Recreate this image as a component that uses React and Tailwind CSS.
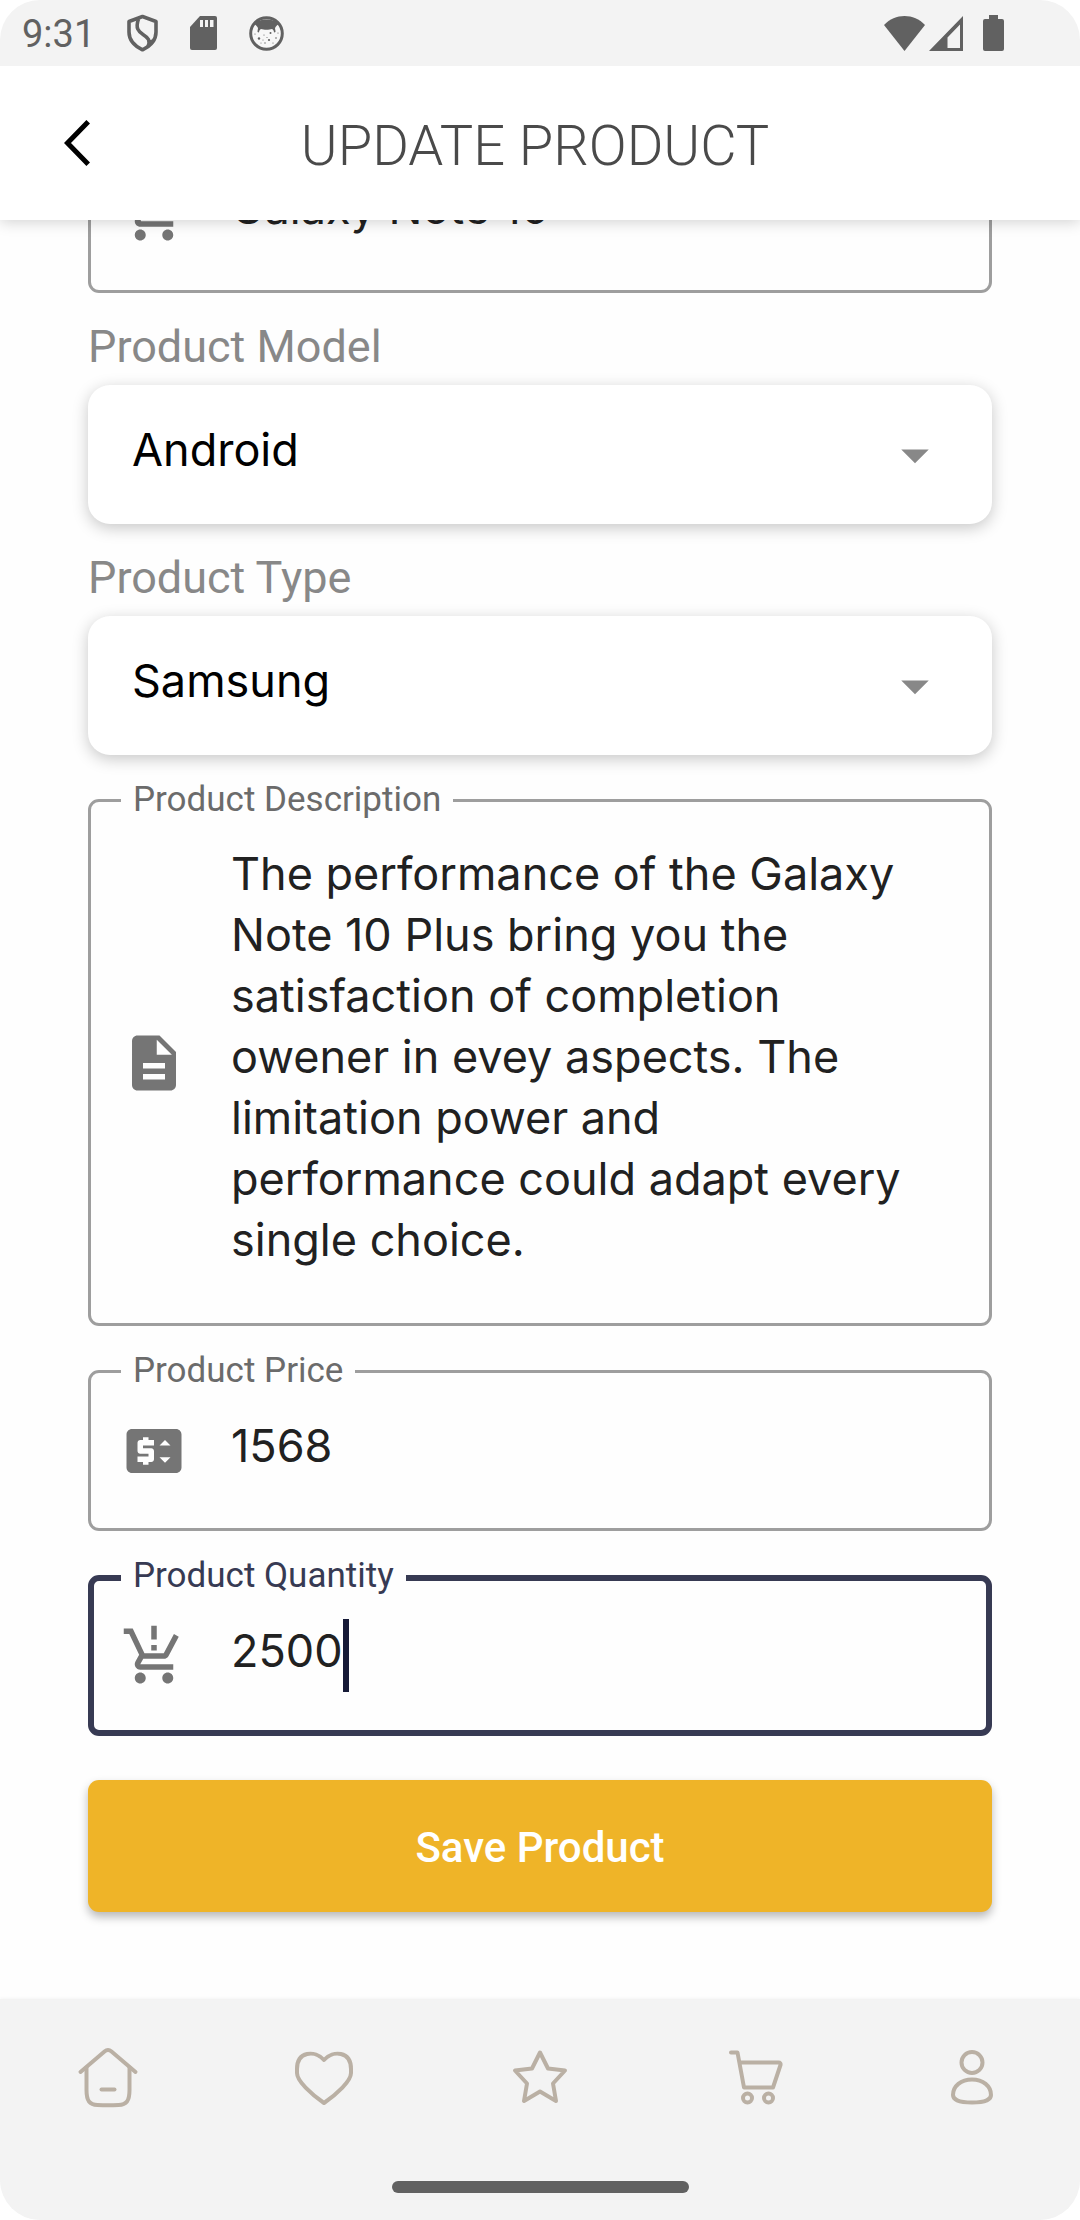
import React from "react";
import {
  MdArrowDropDown,
  MdDescription,
  MdPriceChange,
  MdProductionQuantityLimits,
  MdShoppingCart,
} from "react-icons/md";

const valueText = "font-['Inter',sans-serif] text-[45px] leading-[61px] text-[#212121]";

function ShieldIcon() {
  return (
    <svg className="h-[38px] w-[31px]" viewBox="0 0 31 38" fill="none" stroke="#616161" strokeWidth="3.6" strokeLinejoin="round" aria-hidden="true">
      <path d="M15.500 2.500 29 7.500V18c0 8-5.500 14-13.500 17.800C7.500 32 2 26 2 18V7.500z" />
      <path d="M11.500 5C8 15 12 17.500 16 20.500c5.500 3.500 7.500 6 5 12" />
      <path d="M22 27l3 -1 -3 5z" fill="#616161" strokeWidth="1" />
    </svg>
  );
}

function SdCardIcon() {
  return (
    <svg className="h-[34px] w-[27px]" viewBox="0 0 27 34" aria-hidden="true">
      <path fill="#616161" d="M10 0h15a2 2 0 0 1 2 2v30a2 2 0 0 1-2 2H2a2 2 0 0 1-2-2V11z" />
      <path fill="#f3f3f3" d="M10 4h3v7h-3zM15 4h3v7h-3zM20 4h3.500v7H20z" />
    </svg>
  );
}

function FaceIcon() {
  return (
    <svg className="size-[35px]" viewBox="0 0 35 35" aria-hidden="true">
      <circle cx="17.500" cy="17.500" r="15.800" fill="#f7f7f7" stroke="#616161" strokeWidth="3" />
      <path fill="#616161" d="M5 8C9 2 26 2 30 8c-2 1-3 2-4 4 0 1 .5 2 .5 4l-1.500.5c0-2-1-3-2-3.500-3 1-8 1-11 0-1 .5-2 1.500-2 3.500L8.500 16c0-2 .5-3 .5-4-1-2-2-3-4-4z" />
      <g fill="#616161">
        <circle cx="10" cy="22.500" r="1.200" />
        <circle cx="21.500" cy="17" r="1" />
        <circle cx="20" cy="24" r="1.100" />
        <circle cx="27" cy="22" r=".8" />
        <circle cx="15" cy="19" r=".6" />
        <circle cx="16" cy="27" r=".7" />
        <circle cx="12" cy="27" r=".5" />
        <circle cx="24" cy="27" r=".6" />
        <circle cx="6" cy="18" r=".6" />
        <circle cx="18" cy="21.500" r=".5" />
        <circle cx="29" cy="17" r=".6" />
        <circle cx="14" cy="24" r=".5" />
      </g>
    </svg>
  );
}

function StatusBar() {
  return (
    <div className="relative z-20 flex h-[66px] items-center bg-[#f3f3f3] pr-[76px] pl-[22px] font-['Roboto',sans-serif] text-[#616161]">
      <span className="pt-[2px] text-[38px] leading-[44px]">9:31</span>
      <div className="ml-8 flex items-center gap-8">
        <ShieldIcon />
        <SdCardIcon />
        <FaceIcon />
      </div>
      <div className="ml-auto flex items-center">
        <svg className="h-[35px] w-[41px]" viewBox="0 0 41 35" aria-hidden="true">
          <path fill="#616161" d="M0 9C11-3 30-3 41 9L20.500 35z" />
        </svg>
        <svg className="ml-1 h-[35px] w-[34px]" viewBox="0 0 34 35" aria-hidden="true">
          <path fill="#616161" fillRule="evenodd" d="M34 0v35H0zM31 8.500 18.500 21.500V32H31z" />
        </svg>
        <svg className="ml-5 h-[36px] w-[21px]" viewBox="0 0 21 36" aria-hidden="true">
          <path fill="#616161" d="M6 0h9v4h4a2 2 0 0 1 2 2v28a2 2 0 0 1-2 2H2a2 2 0 0 1-2-2V6a2 2 0 0 1 2-2h4z" />
        </svg>
      </div>
    </div>
  );
}

function Header() {
  return (
    <header className="relative z-10 grid h-[154px] grid-cols-[154px_1fr_164px] items-center bg-white shadow-[0_2px_14px_rgba(0,0,0,0.18)]">
      <button type="button" aria-label="Back" className="flex h-[154px] items-center justify-center">
        <svg className="h-[46px] w-[26px]" viewBox="0 0 26 46" fill="none" stroke="#000" strokeWidth="5" aria-hidden="true">
          <path d="M24.200 1.800 3.500 23 24.200 44.200" />
        </svg>
      </button>
      <h1 className="pt-[6px] text-center font-['Roboto',sans-serif] text-[56px] leading-[64px] font-light text-[#4a4a4a]">
        UPDATE PRODUCT
      </h1>
    </header>
  );
}

function OutlinedField({ id, label, icon: Icon, active = false, children }) {
  return (
    <div
      className={
        active
          ? "relative mt-11 flex items-center rounded-[11px] border-6 border-[#373a53] pr-[52px] pl-[27px]"
          : "relative mt-11 flex items-center rounded-[11px] border-3 border-[#9e9e9e] pr-[55px] pl-[30px]"
      }
    >
      {label && (
        <label
          htmlFor={id}
          className={
            active
              ? "absolute -top-[25px] left-[27px] bg-[#fefefe] px-3 font-['Roboto',sans-serif] text-[35px] leading-[40px] text-[#373a53]"
              : "absolute -top-[22px] left-[30px] bg-[#fefefe] px-3 font-['Roboto',sans-serif] text-[35px] leading-[40px] text-[#6b6b6b]"
          }
        >
          {label}
        </label>
      )}
      <Icon className="mr-11 size-[66px] shrink-0 text-[#757575]" aria-hidden="true" />
      {children}
    </div>
  );
}

function SelectField({ id, label, options }) {
  return (
    <div className="mt-8 flex flex-col">
      <label htmlFor={id} className="mb-4 font-['Roboto',sans-serif] text-[45px] leading-[44px] text-[#888888]">
        {label}
      </label>
      <div className="relative flex items-center">
        <select
          id={id}
          className="h-[139px] w-full appearance-none rounded-[22px] bg-white pr-[110px] pb-[10px] pl-11 font-['Inter',sans-serif] text-[45px] leading-[61px] text-black shadow-[0_4px_16px_rgba(0,0,0,0.22)]"
        >
          {options.map((o) => (
            <option key={o}>{o}</option>
          ))}
        </select>
        <MdArrowDropDown className="pointer-events-none absolute right-11 size-[66px] text-[#888888]" aria-hidden="true" />
      </div>
    </div>
  );
}

const navItems = [
  {
    name: "Home",
    art: (
      <>
        <path d="M5.500 28 29.500 7.500q3.500-3 7 0L60.500 28" />
        <path d="M11.500 23.500V46c0 11 3 14.500 11 15q10.500.5 21 0c8-.5 11-4 11-15V23.500" />
        <path d="M26.500 45.500h13" />
      </>
    ),
  },
  {
    name: "Favourites",
    art: <path d="M33 16C24 6 6 7 6 25v4c0 8 14 21 27 30 13-9 27-22 27-30v-4C60 7 42 6 33 16z" />,
  },
  {
    name: "Starred",
    art: <path d="M33 8.500 41 24.500 58 26.500 46 39.500 49 57 33 47.500 17 57 20 39.500 8 26.500 25 24.500z" />,
  },
  {
    name: "Cart",
    art: (
      <>
        <path d="M8 8.500h6.500L21 43.500h29L57.500 21q.5-2.500-2-2.500H17" />
        <circle cx="24.500" cy="54" r="4.500" />
        <circle cx="45.500" cy="54" r="4.500" />
      </>
    ),
  },
  {
    name: "Profile",
    art: (
      <>
        <circle cx="33" cy="18.500" r="10.500" />
        <path d="M14 51C14 42 22 35.500 33 35.500S52 42 52 51c0 4-5 7.500-19 7.500S14 55 14 51z" />
      </>
    ),
  },
];

function BottomNav() {
  return (
    <footer className="flex flex-col items-center bg-[#f3f3f3] pb-[27px] shadow-[0_-1px_3px_rgba(0,0,0,0.04)]">
      <nav className="grid w-full grid-cols-5 pt-[45px]">
        {navItems.map(({ name, art }) => (
          <a key={name} href="#" aria-label={name} className="flex justify-center">
            <svg
              className="size-[66px]"
              viewBox="0 0 66 66"
              fill="none"
              stroke="#bab0a4"
              strokeWidth="4"
              strokeLinecap="round"
              strokeLinejoin="round"
              aria-hidden="true"
            >
              {art}
            </svg>
          </a>
        ))}
      </nav>
      <div className="mt-[71px] h-3 w-[297px] rounded-full bg-[#616161]" />
    </footer>
  );
}

export default function App() {
  return (
    <div className="flex min-h-screen flex-col overflow-hidden rounded-[40px] bg-[#fefefe]">
      <StatusBar />
      <Header />
      <main className="flex-1 px-[88px] pb-[87px]">
        <form className="-mt-[132px] flex flex-col" onSubmit={(e) => e.preventDefault()}>
          <OutlinedField id="name" icon={MdShoppingCart}>
            <input
              id="name"
              type="text"
              aria-label="Product Name"
              defaultValue="Galaxy Note 10"
              className={`h-[155px] w-full min-w-0 pb-[10px] outline-none ${valueText}`}
            />
          </OutlinedField>
          <SelectField id="model" label="Product Model" options={["Android", "iOS"]} />
          <SelectField id="type" label="Product Type" options={["Samsung", "Apple"]} />
          <OutlinedField id="description" label="Product Description" icon={MdDescription}>
            <textarea
              id="description"
              rows={7}
              defaultValue="The performance of the Galaxy Note 10 Plus bring you the satisfaction of completion owener in evey aspects. The limitation power and performance could adapt every single choice."
              className={`mt-[41px] mb-[53px] w-full min-w-0 resize-none overflow-hidden outline-none ${valueText}`}
            />
          </OutlinedField>
          <OutlinedField id="price" label="Product Price" icon={MdPriceChange}>
            <input id="price" type="text" inputMode="numeric" defaultValue="1568" className={`h-[155px] w-full min-w-0 pb-[10px] outline-none ${valueText}`} />
          </OutlinedField>
          <OutlinedField id="quantity" label="Product Quantity" icon={MdProductionQuantityLimits} active>
            <input
              id="quantity"
              type="text"
              inputMode="numeric"
              defaultValue="2500"
              className={`field-sizing-content h-[149px] pb-[10px] caret-transparent outline-none ${valueText}`}
            />
            <span className="h-[73px] w-[6px] bg-[#161a37]" aria-hidden="true" />
          </OutlinedField>
          <button
            type="submit"
            className="mt-11 h-[132px] rounded-[11px] bg-[#efb428] pt-1 font-['Roboto',sans-serif] text-[42px] leading-[48px] font-medium text-white shadow-[0_5px_10px_rgba(0,0,0,0.28)]"
          >
            Save Product
          </button>
        </form>
      </main>
      <BottomNav />
    </div>
  );
}
